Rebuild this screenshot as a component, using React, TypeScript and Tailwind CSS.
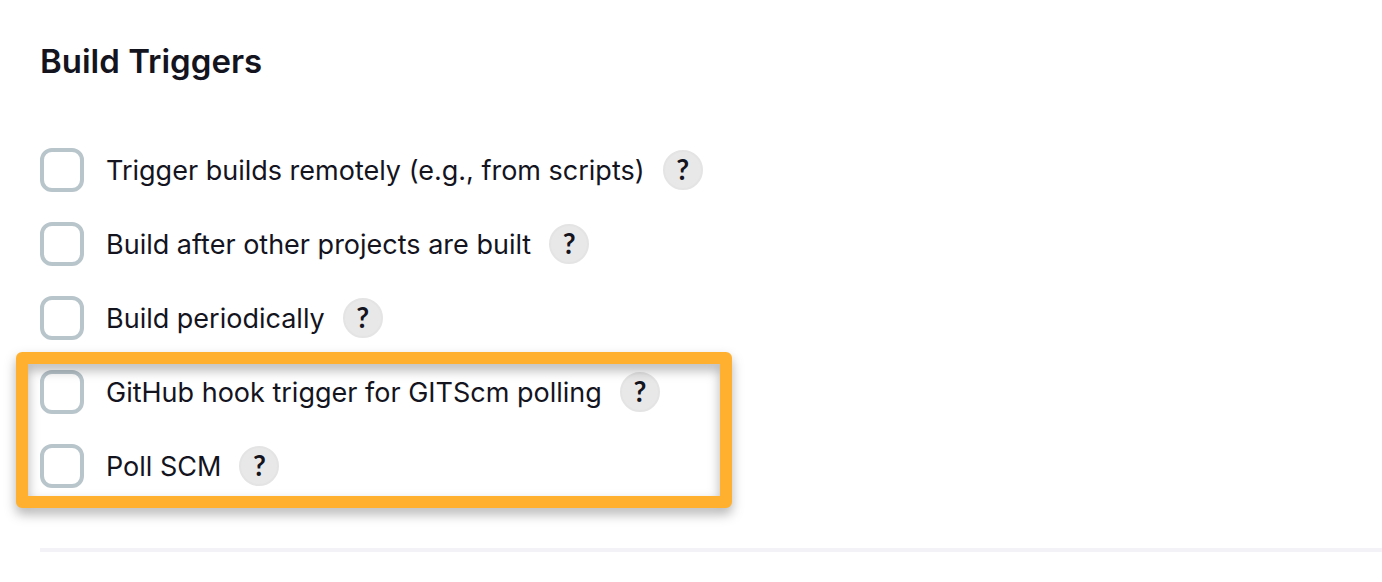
const triggers = [
  { id: 'remote', label: 'Trigger builds remotely (e.g., from scripts)' },
  { id: 'upstream', label: 'Build after other projects are built' },
  { id: 'timer', label: 'Build periodically' },
  { id: 'github', label: 'GitHub hook trigger for GITScm polling' },
  { id: 'scm', label: 'Poll SCM' },
];

function TriggerRow({ id, label }: { id: string; label: string }) {
  return (
    <li className="flex h-11 items-center">
      <input
        id={id}
        type="checkbox"
        className="size-11 shrink-0 appearance-none rounded-xl border-4 border-[#b8c5cb] bg-white checked:bg-[#0b6aa2]"
      />
      <label htmlFor={id} className="pt-0.5 pl-[22px] text-[27px] leading-9">
        {label}
      </label>
      <button
        type="button"
        aria-label={`Help for ${label}`}
        className="ml-[18px] flex size-10 shrink-0 items-center justify-center rounded-full border-2 border-[#e4e4e4] bg-[#e8e8e8] pb-0.5 font-['Lato',sans-serif] text-[28px] leading-8 font-bold"
      >
        ?
      </button>
    </li>
  );
}

export default function App() {
  return (
    <main className="bg-white pt-[39px] pb-7 pl-10 font-['Inter',sans-serif] text-[#14141f]">
      <h2 className="text-[33px] leading-[45px] font-semibold">Build Triggers</h2>
      <div className="relative mt-16">
        <ul className="flex flex-col gap-[30px]">
          {triggers.map((t) => (
            <TriggerRow key={t.id} {...t} />
          ))}
        </ul>
        <div className="pointer-events-none absolute -bottom-5 -left-6 h-39 w-[716px] rounded-md border-12 border-[#ffb02e] drop-shadow-[0_6px_6px_rgba(0,0,0,0.3)]" />
      </div>
      <hr className="mt-15 border-t-4 border-[#f2f2f7]" />
    </main>
  );
}
